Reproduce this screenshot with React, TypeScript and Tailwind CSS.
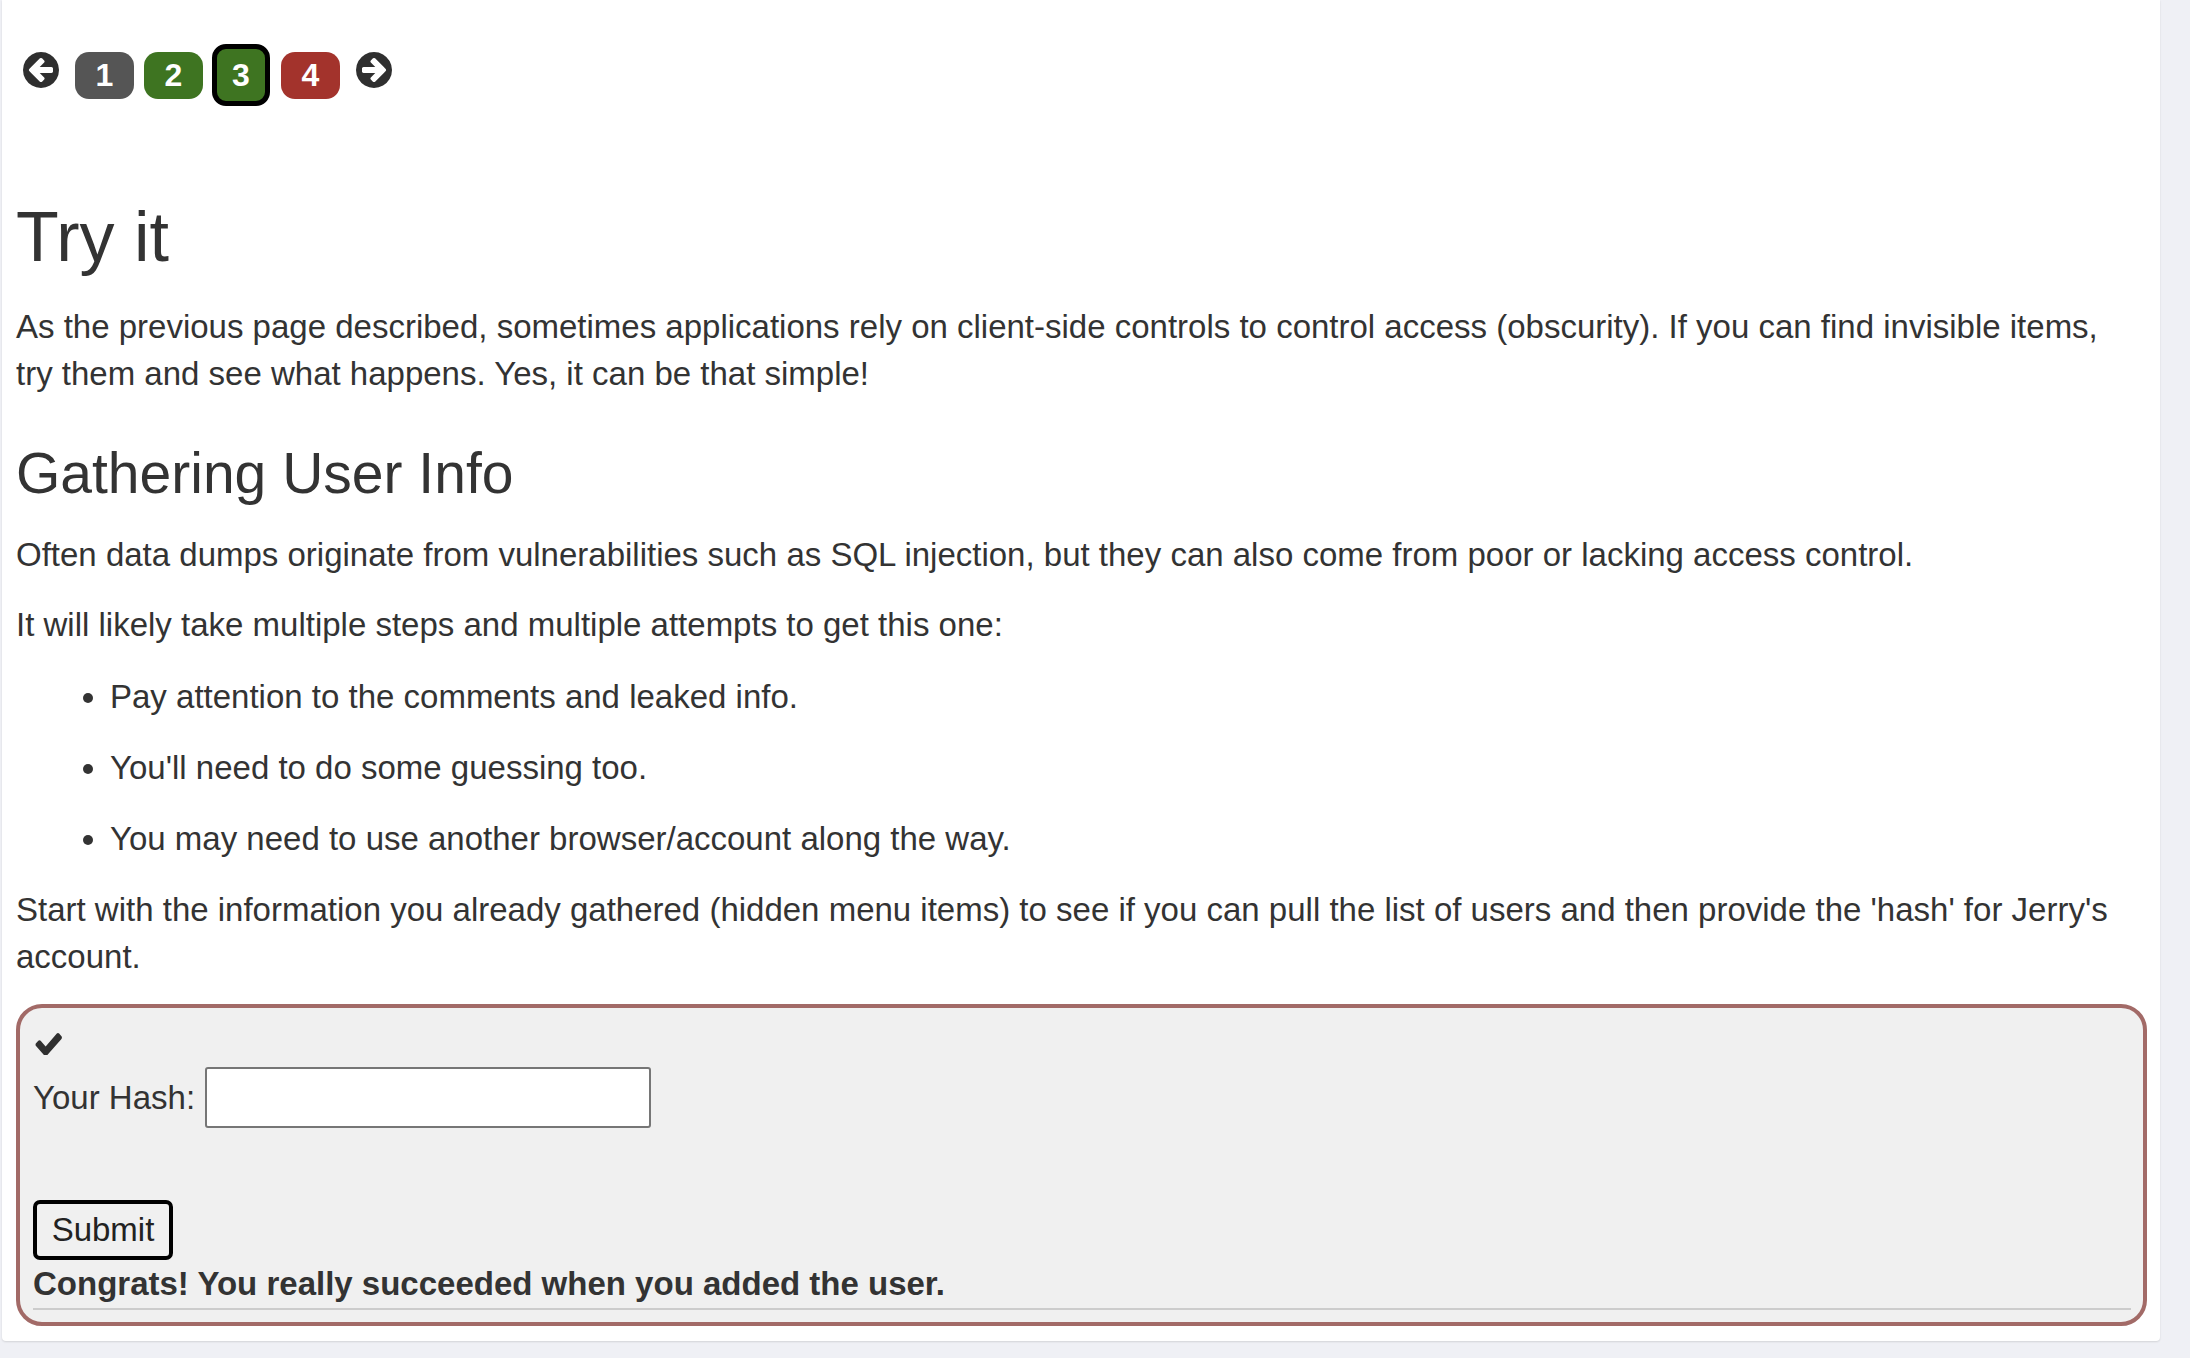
import React from "react";

const ArrowRight = ({ flip = false }: { flip?: boolean }) => (
  <svg
    width="36"
    height="36"
    viewBox="0 0 1536 1536"
    style={flip ? { transform: "scaleX(-1)" } : undefined}
  >
    <path
      fill="#2f2f2f"
      fillRule="evenodd"
      d="M1285 768q0-27-18-45l-91-91-362-362q-18-18-45-18t-45 18l-91 91q-18 18-18 45t18 45l189 189h-502q-26 0-45 19t-19 45v128q0 26 19 45t45 19h502l-189 189q-19 19-19 45t19 45l91 91q18 18 45 18t45-18l362-362 91-91q18-18 18-45zm251 0q0 209-103 385.5t-279.5 279.5-385.5 103-385.5-103-279.5-279.5-103-385.5 103-385.5 279.5-279.5 385.5-103 385.5 103 279.5 279.5 103 385.5z"
    />
  </svg>
);

const Check = () => (
  <svg width="27" height="22" viewBox="90 330 1585 1130" preserveAspectRatio="none">
    <path
      fill="#2f2f2f"
      d="M1671 566q0 40-28 68l-724 724-136 136q-28 28-68 28t-68-28l-136-136-362-362q-28-28-28-68t28-68l136-136q28-28 68-28t68 28l294 295 656-657q28-28 68-28t68 28l136 136q28 28 28 68z"
    />
  </svg>
);

export default function App() {
  return (
    <div className="min-h-screen bg-[#eff0f5] pl-[2px] font-['Liberation_Sans',Arial,sans-serif] text-[#333333]">
      <div className="w-[2158px] bg-white rounded-b-[4px] shadow-[0_1px_2px_rgba(0,0,0,0.12)] pt-[44px] pl-[14px] pr-[13px] pb-[15px]">
        {/* nav */}
        <div className="flex items-center h-[62px] ml-[7px]">
          <div className="mb-[10px]">
            <ArrowRight flip />
          </div>
          <div className="ml-[16px] w-[59px] h-[47px] rounded-[14px] bg-[#555555] text-white font-bold text-[32px] flex items-center justify-center">
            1
          </div>
          <div className="ml-[10px] w-[59px] h-[47px] rounded-[14px] bg-[#3e7421] text-white font-bold text-[32px] flex items-center justify-center">
            2
          </div>
          <div className="ml-[9px] w-[58px] h-[62px] rounded-[14px] border-[5px] border-black bg-[#3e7421] text-white font-bold text-[32px] flex items-center justify-center">
            3
          </div>
          <div className="ml-[11px] w-[59px] h-[47px] rounded-[14px] bg-[#a3332c] text-white font-bold text-[32px] flex items-center justify-center">
            4
          </div>
          <div className="ml-[16px] mb-[10px]">
            <ArrowRight />
          </div>
        </div>

        <h1 className="mt-[93px] text-[70px] leading-[77px] font-normal">Try it</h1>
        <p className="mt-[27px] pr-[18px] text-[33px] leading-[47px]">
          As the previous page described, sometimes applications rely on client-side controls to control access (obscurity). If you can find invisible items, try them and see what happens. Yes, it can be that simple!
        </p>

        <h2 className="mt-[45px] text-[57px] leading-[63px] font-normal">Gathering User Info</h2>
        <p className="mt-[26px] text-[33px] leading-[47px]">
          Often data dumps originate from vulnerabilities such as SQL injection, but they can also come from poor or lacking access control.
        </p>
        <p className="mt-[23px] text-[33px] leading-[47px]">
          It will likely take multiple steps and multiple attempts to get this one:
        </p>
        <ul className="mt-[25px] list-disc pl-[94px] text-[33px] leading-[47px]">
          <li>Pay attention to the comments and leaked info.</li>
          <li className="mt-[24px]">You'll need to do some guessing too.</li>
          <li className="mt-[24px]">You may need to use another browser/account along the way.</li>
        </ul>
        <p className="mt-[24px] pr-[18px] text-[33px] leading-[47px]">
          Start with the information you already gathered (hidden menu items) to see if you can pull the list of users and then provide the 'hash' for Jerry's account.
        </p>

        {/* attack box */}
        <div className="mt-[24px] border-[4.5px] border-[#a26a67] rounded-[26px] bg-[#f0f0f0] pt-[12px] pl-[13px] pr-[12px] pb-[12px]">
          <div className="h-[47px] flex items-center pl-[2px]">
            <Check />
          </div>
          <div className="flex items-center h-[61px]">
            <span className="text-[33px] leading-[47px]">Your Hash:</span>
            <input
              type="text"
              className="ml-[10px] w-[446px] h-[61px] bg-white border-2 border-[#767676] rounded-[3px] outline-none"
            />
          </div>
          <div className="mt-[72px]">
            <button className="h-[60px] w-[140px] border-[4px] border-black rounded-[7px] bg-[#f0f0f0] text-[33px] text-[#222] font-['Liberation_Sans',Arial,sans-serif]">
              Submit
            </button>
          </div>
          <div className="text-[33px] leading-[47px] font-bold">
            Congrats! You really succeeded when you added the user.
          </div>
          <div className="mt-[1px] h-[2px] bg-[#cccccc]" />
        </div>
      </div>
    </div>
  );
}
